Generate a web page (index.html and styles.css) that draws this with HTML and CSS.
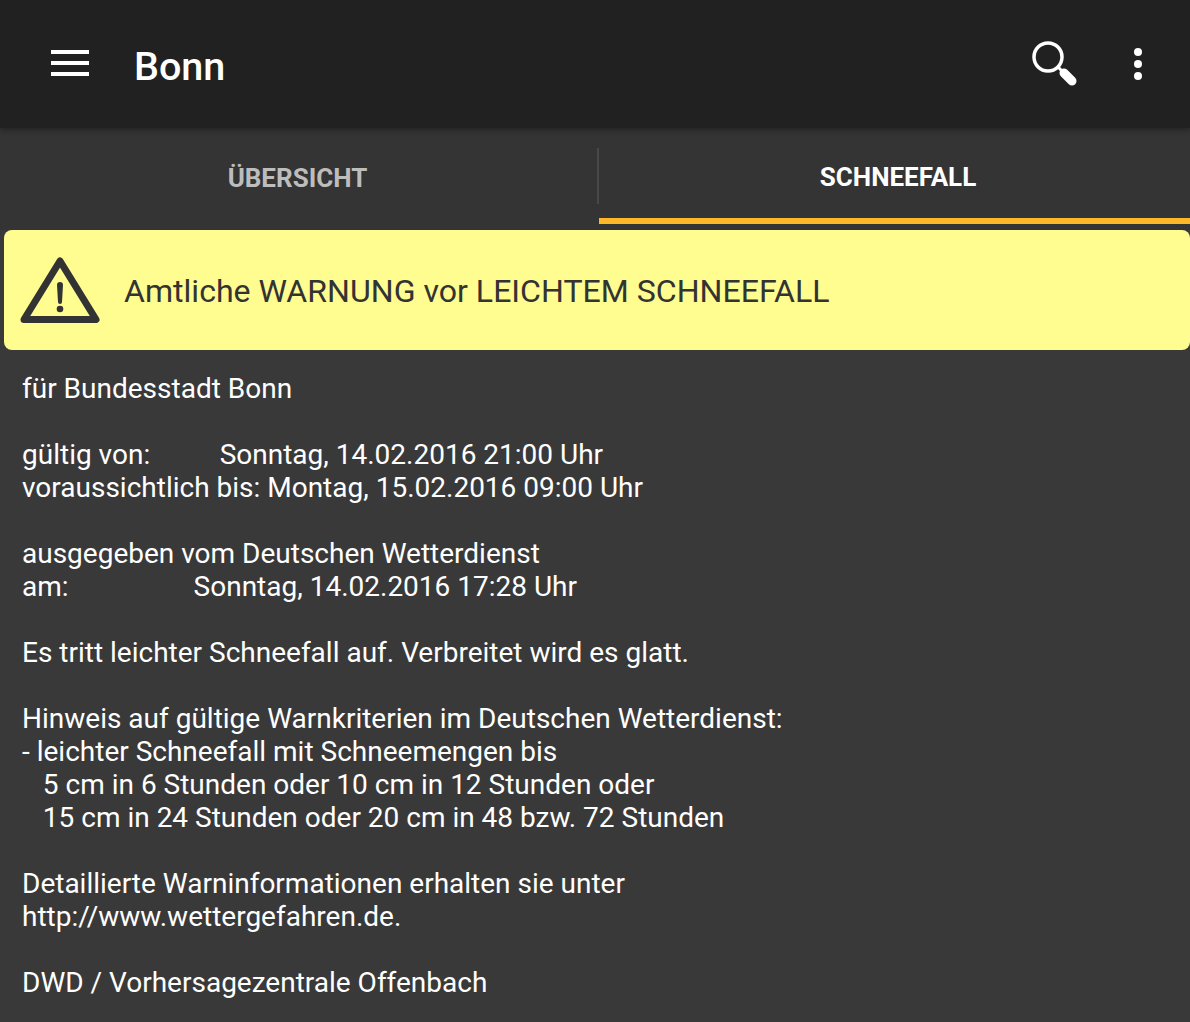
FILE: index.html
```html
<!DOCTYPE html>
<html lang="de">
<head>
<meta charset="UTF-8" />
<meta name="viewport" content="width=device-width, initial-scale=1" />
<title>Bonn</title>
<link rel="stylesheet" href="styles.css">
</head>
<body>

<header class="toolbar">
  <svg class="menu-icon" width="38" height="26" viewBox="0 0 38 26" fill="#fff">
    <rect x="0" y="0" width="38" height="4" />
    <rect x="0" y="11" width="38" height="4" />
    <rect x="0" y="22" width="38" height="4" />
  </svg>
  <div class="title">Bonn</div>
  <svg class="search-icon" width="46" height="46" viewBox="0 0 46 46">
    <circle cx="16" cy="16" r="14" fill="none" stroke="#fff" stroke-width="3.5" />
    <path d="M26 26 L30 30" stroke="#fff" stroke-width="3" />
    <path d="M32 32 L40 40" stroke="#fff" stroke-width="9" stroke-linecap="round" />
  </svg>
  <svg class="more-icon" width="12" height="36" viewBox="0 0 12 36" fill="#fff">
    <circle cx="6" cy="6" r="4" />
    <circle cx="6" cy="18" r="4" />
    <circle cx="6" cy="30" r="4" />
  </svg>
</header>

<nav class="tabs">
  <div class="tab">ÜBERSICHT</div>
  <div class="tab active">SCHNEEFALL</div>
</nav>

<section class="warning">
  <svg class="warning-icon" width="82" height="68" viewBox="0 0 82 68">
    <path d="M41 5 L77 63.5 H5 Z" fill="none" stroke="#333" stroke-width="7" stroke-linejoin="round" />
    <path d="M38 29 a3 3 0 0 1 6 0 L43 46 a2 2 0 0 1 -4 0 Z" fill="#333" />
    <circle cx="41" cy="53" r="3.3" fill="#333" />
  </svg>
  <div class="warning-text">Amtliche WARNUNG vor LEICHTEM SCHNEEFALL</div>
</section>

<main class="details">für Bundesstadt Bonn

gültig von:          Sonntag, 14.02.2016 21:00 Uhr
voraussichtlich bis: Montag, 15.02.2016 09:00 Uhr

ausgegeben vom Deutschen Wetterdienst
am:                  Sonntag, 14.02.2016 17:28 Uhr

Es tritt leichter Schneefall auf. Verbreitet wird es glatt.

Hinweis auf gültige Warnkriterien im Deutschen Wetterdienst:
- leichter Schneefall mit Schneemengen bis
   5 cm in 6 Stunden oder 10 cm in 12 Stunden oder
   15 cm in 24 Stunden oder 20 cm in 48 bzw. 72 Stunden

Detaillierte Warninformationen erhalten sie unter
http://www.wettergefahren.de.

DWD / Vorhersagezentrale Offenbach</main>

</body>
</html>
```

FILE: styles.css
```css
* {
  box-sizing: border-box;
}
html, body {
  height: 100%;
}
body {
  margin: 0;
  height: 1022px;
  overflow: hidden;
  background: #393939;
  color: #fff;
  font-family: Roboto, sans-serif;
}
.toolbar {
  height: 128px;
  background: #212121;
  display: flex;
  align-items: center;
  padding: 0 46px 0 51px;
  box-shadow: 0 2px 6px rgba(0,0,0,0.35);
  position: relative;
}
.menu-icon {
  flex: none;
  margin-top: -2px;
}
.title {
  margin-left: 45px;
  margin-top: 5px;
  flex: 1;
  font-size: 39.5px;
  font-weight: 500;
}
.search-icon {
  flex: none;
  margin-left: 1px;
}
.more-icon {
  flex: none;
  margin-left: 54px;
}
.tabs {
  height: 102px;
  padding-bottom: 6px;
  display: flex;
  background: #343434;
}
.tab {
  width: 598px;
  flex: none;
  display: flex;
  align-items: center;
  justify-content: center;
  padding: 3px 3px 0 0;
  font-size: 26px;
  font-weight: 700;
  color: #bdbdbd;
  position: relative;
}
.tab.active {
  width: 591px;
  color: #fff;
  border-bottom: 6px solid #fdb827;
  padding: 8px 0 0 7px;
  margin-left: 1px;
}
.tab.active::before {
  content: "";
  position: absolute;
  left: -2px;
  top: 20px;
  height: 56px;
  width: 2px;
  background: #484848;
}
.warning {
  height: 120px;
  margin-left: 4px;
  background: #fffc90;
  border-radius: 8px;
  display: flex;
  align-items: center;
  padding-left: 15px;
  color: #333;
}
.warning-icon {
  flex: none;
}
.warning-text {
  margin-left: 23px;
  margin-top: 1px;
  font-size: 32.1px;
}
.details {
  white-space: pre;
  padding: 22px 0 0 22px;
  font-size: 28px;
  line-height: 33px;
}
```
